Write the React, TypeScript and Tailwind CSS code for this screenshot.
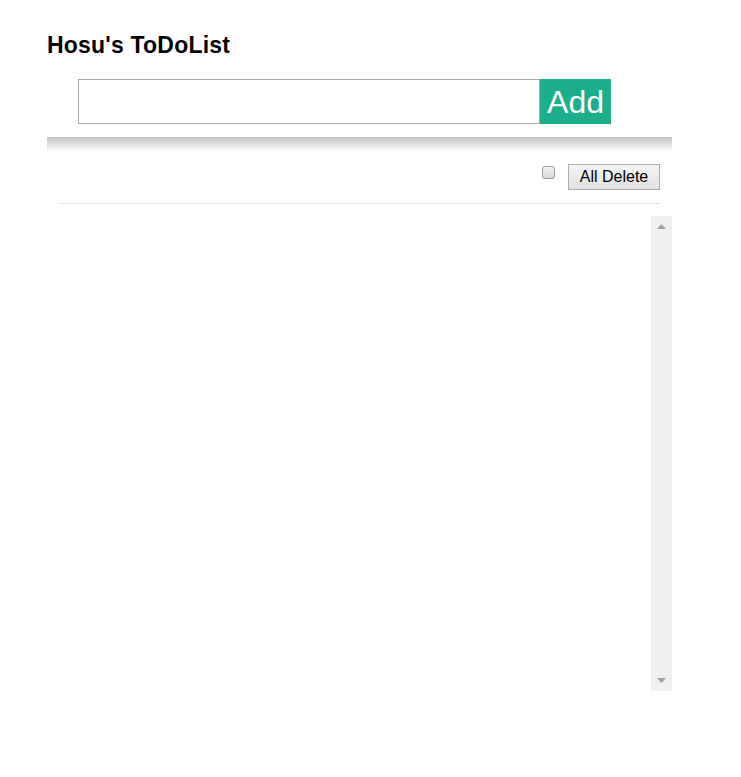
import React from "react";

export default function App() {
  return (
    <div className="min-h-screen bg-white pl-[47px] pt-[34px]" style={{ fontFamily: '"Liberation Sans", Arial, sans-serif' }}>
      <div className="w-[625px]">
        <h1 className="text-[23px] font-bold leading-[23px] tracking-[0.2px] text-black">Hosu's ToDoList</h1>
        <div className="mt-[22px] ml-[31px] flex h-[45px]">
          <input
            type="text"
            className="h-[45px] w-[462px] border border-[#a9a9a9] bg-white px-2 outline-none"
          />
          <button className="flex h-[45px] w-[71px] items-center justify-center bg-[#1bae8a] text-[32px] leading-none text-white">
            Add
          </button>
        </div>
        <div className="mt-[13px] h-[15px] w-full bg-gradient-to-b from-[#c4c4c4] to-white" />
        <div className="mt-[12px] flex items-start justify-end gap-[13px] pr-[12px]">
          <div className="mt-[2px] h-[13px] w-[13px] rounded-[3px] border border-[#9a9a9a] bg-gradient-to-b from-[#f2f2f2] to-[#d9d9d9]" />
          <button className="h-[26px] w-[92px] border border-[#adadad] bg-gradient-to-b from-[#f4f4f4] to-[#e2e2e2] text-[16px] leading-none text-black">
            All Delete
          </button>
        </div>
        <div className="mx-[13px] mt-[13px] border-t border-dotted border-[#c8c8c8]" />
        <div className="mt-[12px] flex h-[475px]">
          <div className="flex-1" />
          <div className="flex w-[21px] flex-col items-center justify-between bg-[#f0f0f0] py-[8px]">
            <svg width="9" height="5" viewBox="0 0 9 5">
              <polygon points="4.5,0 9,5 0,5" fill="#a3a3a3" />
            </svg>
            <svg width="9" height="5" viewBox="0 0 9 5">
              <polygon points="0,0 9,0 4.5,5" fill="#a3a3a3" />
            </svg>
          </div>
        </div>
      </div>
    </div>
  );
}
